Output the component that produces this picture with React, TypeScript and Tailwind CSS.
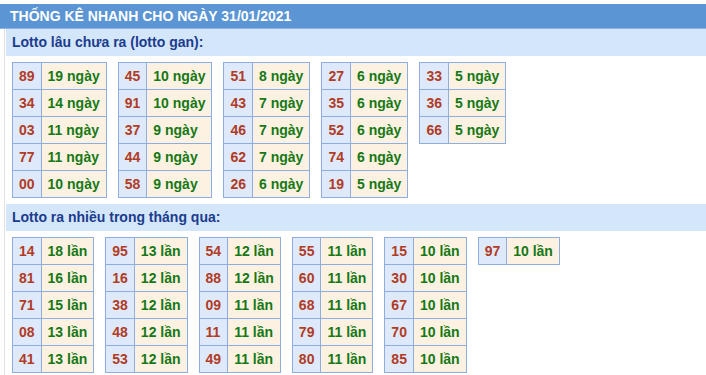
import React from "react";

type Row = [string, string];

const gan: Row[][] = [
  [["89", "19"], ["34", "14"], ["03", "11"], ["77", "11"], ["00", "10"]],
  [["45", "10"], ["91", "10"], ["37", "9"], ["44", "9"], ["58", "9"]],
  [["51", "8"], ["43", "7"], ["46", "7"], ["62", "7"], ["26", "6"]],
  [["27", "6"], ["35", "6"], ["52", "6"], ["74", "6"], ["19", "5"]],
  [["33", "5"], ["36", "5"], ["66", "5"]],
];

const nhieu: Row[][] = [
  [["14", "18"], ["81", "16"], ["71", "15"], ["08", "13"], ["41", "13"]],
  [["95", "13"], ["16", "12"], ["38", "12"], ["48", "12"], ["53", "12"]],
  [["54", "12"], ["88", "12"], ["09", "11"], ["11", "11"], ["49", "11"]],
  [["55", "11"], ["60", "11"], ["68", "11"], ["79", "11"], ["80", "11"]],
  [["15", "10"], ["30", "10"], ["67", "10"], ["70", "10"], ["85", "10"]],
  [["97", "10"]],
];

function Table({ rows, unit }: { rows: Row[]; unit: string }) {
  return (
    <table className="border-collapse border border-[#8eaee0]">
      <tbody>
        {rows.map(([n, c], i) => (
          <tr key={i} className="h-[27px]">
            <td className="border border-[#8eaee0] bg-[#deeafb] px-[6px] text-[#b13b25] leading-none">
              {n}
            </td>
            <td className="border border-[#8eaee0] bg-[#fdf2e1] px-[6px] text-[#167816] leading-none whitespace-nowrap">
              {c} {unit}
            </td>
          </tr>
        ))}
      </tbody>
    </table>
  );
}

function Section({ title, tables, unit }: { title: string; tables: Row[][]; unit: string }) {
  return (
    <div>
      <div className="bg-[#d4e6fa] h-[27px] flex items-center pl-[6px] text-[#1b3c8e] font-bold text-[14px]">
        {title}
      </div>
      <div className="flex items-start gap-[11px] pl-[6px] pt-[6px] pb-[6px]">
        {tables.map((t, i) => (
          <Table key={i} rows={t} unit={unit} />
        ))}
      </div>
    </div>
  );
}

export default function App() {
  return (
    <div
      className="w-[706px] h-[375px] bg-white overflow-hidden pt-[4px]"
      style={{ fontFamily: '"Liberation Sans", Arial, sans-serif' }}
    >
      <div className="bg-[#5b95d4] h-[25px] flex items-center pl-[10px] text-white font-bold text-[14px] border-b border-[#8db4e2]">
        THỐNG KÊ NHANH CHO NGÀY 31/01/2021
      </div>
      <div className="ml-[4px] border-l border-[#e2e2e2] pl-[1px] text-[14px] font-bold">
        <Section title="Lotto lâu chưa ra (lotto gan):" tables={gan} unit="ngày" />
        <Section title="Lotto ra nhiều trong tháng qua:" tables={nhieu} unit="lần" />
      </div>
    </div>
  );
}
